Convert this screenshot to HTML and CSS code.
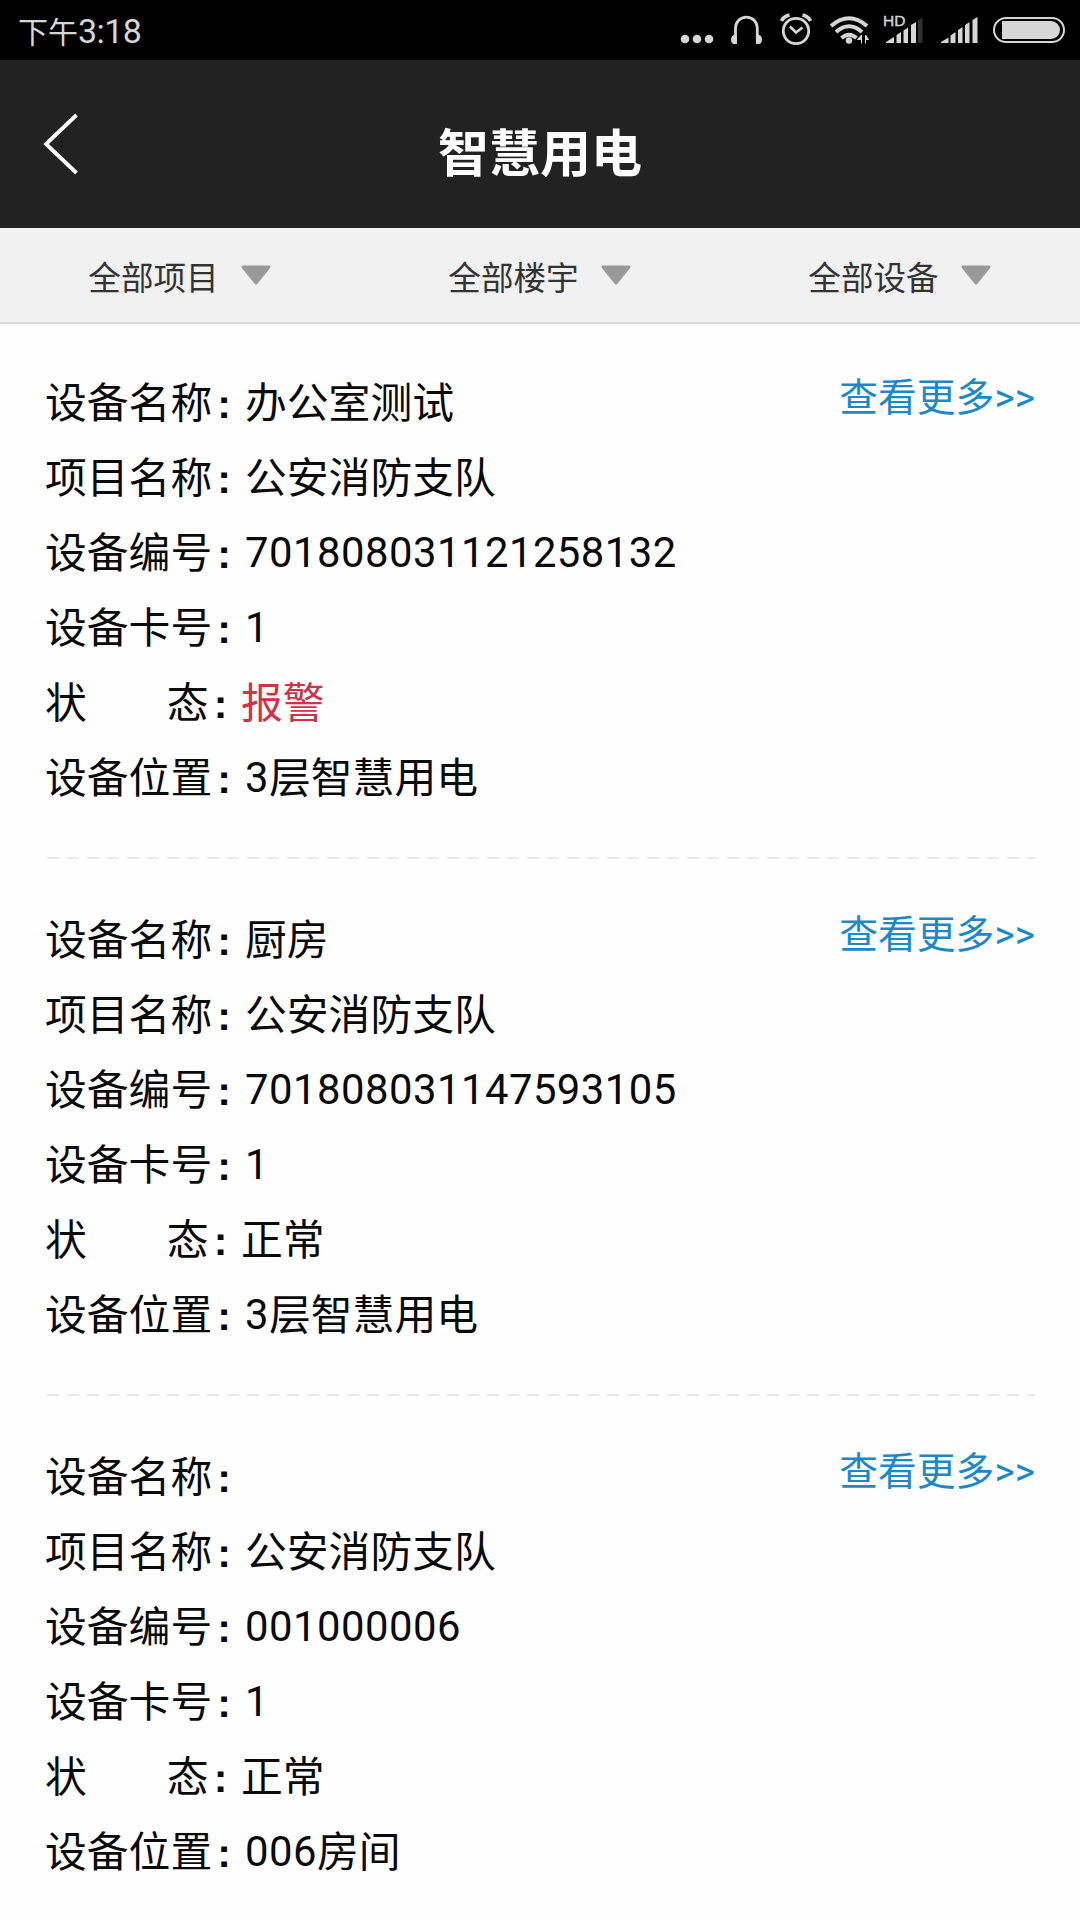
FILE: index.html
```
<!DOCTYPE html>
<html lang="zh-cn">
<head>
    <meta charset="UTF-8" />
    <title>智慧用电</title>
    <link rel="stylesheet" href="styles.css">
</head>
<body>
    <div class="status-bar">
        <div class="time">下午<span>3:18</span></div>
        <svg class="status-icons" width="420" height="60" viewBox="0 0 420 60">
            <!-- 更多 -->
            <g fill="#d6d6d6">
                <circle cx="25" cy="39" r="4.3"/>
                <circle cx="37" cy="39" r="4.3"/>
                <circle cx="49" cy="39" r="4.3"/>
            </g>
            <!-- 耳机 -->
            <path d="M75.500 42V28a10.900 10.900 0 0 1 21.800 0V42" fill="none" stroke="#d6d6d6" stroke-width="2.800"/>
            <path d="M77 34.500v9.500h-3.500q-2.500-1-2.500-4.500t2.500-4.500zM96 34.500v9.500h3.500q2.500-1 2.500-4.500t-2.500-4.500z" fill="#d6d6d6"/>
            <!-- 闹钟 -->
            <g fill="none" stroke="#d6d6d6" stroke-width="2.800">
                <circle cx="136" cy="31" r="12.700"/>
                <path d="M130 26.500l6 6 6.500-5"/>
                <path d="M121.500 21q2-4.500 8-6M150.500 21q-2-4.500-8-6" stroke-width="3.500"/>
            </g>
            <!-- wifi -->
            <g fill="none" stroke="#d6d6d6" stroke-width="4">
                <path d="M171 26q18-15.500 36 0"/>
                <path d="M176 32q13-11.500 26 0"/>
                <path d="M181.500 38q7.500-6.500 15 0" />
            </g>
            <circle cx="189" cy="40.500" r="3.200" fill="#d6d6d6"/>
            <path d="M201.500 43.500V35l-4 4.500h4M205.500 35v8.500M205.500 35l3 4.500h-3" fill="#d6d6d6" stroke="#d6d6d6" stroke-width="1"/>
            <!-- 信号 -->
            <text x="223" y="26" class="hd">HD</text>
            <g fill="#d6d6d6">
                <path d="M226 43v-1l8-5v6zM236.500 43v-8l4.500-3v11zM243.500 43V30.500l4.500-3V43zM251 43V25l5-3v21z"/>
                <path d="M281 43v-1l7.500-4.500V43zM290.500 43v-7.500l5-3.500v11zM298 43V30l4.500-3v16zM305 43V25l4.500-3v21zM312.500 43V20l5-3v26z"/>
            </g>
            <path d="M258 43V20.500l4.500-3V43z" fill="#303030"/>
            <!-- 电池 -->
            <rect x="334" y="18" width="70" height="24" rx="12" fill="none" stroke="#d6d6d6" stroke-width="2"/>
            <path d="M342 21h49a9 9 0 0 1 0 18h-49z" fill="#d6d6d6"/>
        </svg>
    </div>

    <div class="header">
        <svg class="back" width="40" height="64" viewBox="0 0 40 64">
            <path d="M36.500 3L6 32l30.500 29" fill="none" stroke="#fff" stroke-width="3.800"/>
        </svg>
        <h1>智慧用电</h1>
    </div>

    <div class="filter">
        <div class="filter-item">全部项目<svg width="32" height="22" viewBox="0 0 32 22"><path d="M3 3h26L16 19z"/></svg></div>
        <div class="filter-item">全部楼宇<svg width="32" height="22" viewBox="0 0 32 22"><path d="M3 3h26L16 19z"/></svg></div>
        <div class="filter-item">全部设备<svg width="32" height="22" viewBox="0 0 32 22"><path d="M3 3h26L16 19z"/></svg></div>
    </div>

    <div class="list">
        <div class="item">
            <div class="info">
                <p><span class="label">设备名称<b>:</b></span>办公室测试</p>
                <p><span class="label">项目名称<b>:</b></span>公安消防支队</p>
                <p><span class="label">设备编号<b>:</b></span><span class="num">701808031121258132</span></p>
                <p><span class="label">设备卡号<b>:</b></span><span class="num">1</span></p>
                <p><span class="label state"><i>状</i><i>态</i><b>:</b></span><span class="alarm">报警</span></p>
                <p><span class="label">设备位置<b>:</b></span><span class="num">3</span>层智慧用电</p>
            </div>
            <a class="more">查看更多<span>&gt;&gt;</span></a>
        </div>
        <div class="line"></div>
        <div class="item">
            <div class="info">
                <p><span class="label">设备名称<b>:</b></span>厨房</p>
                <p><span class="label">项目名称<b>:</b></span>公安消防支队</p>
                <p><span class="label">设备编号<b>:</b></span><span class="num">701808031147593105</span></p>
                <p><span class="label">设备卡号<b>:</b></span><span class="num">1</span></p>
                <p><span class="label state"><i>状</i><i>态</i><b>:</b></span>正常</p>
                <p><span class="label">设备位置<b>:</b></span><span class="num">3</span>层智慧用电</p>
            </div>
            <a class="more">查看更多<span>&gt;&gt;</span></a>
        </div>
        <div class="line"></div>
        <div class="item">
            <div class="info">
                <p><span class="label">设备名称<b>:</b></span></p>
                <p><span class="label">项目名称<b>:</b></span>公安消防支队</p>
                <p><span class="label">设备编号<b>:</b></span><span class="num">001000006</span></p>
                <p><span class="label">设备卡号<b>:</b></span><span class="num">1</span></p>
                <p><span class="label state"><i>状</i><i>态</i><b>:</b></span>正常</p>
                <p><span class="label">设备位置<b>:</b></span><span class="num">006</span>房间</p>
            </div>
            <a class="more">查看更多<span>&gt;&gt;</span></a>
        </div>
    </div>
</body>
</html>
```
FILE: styles.css
```
*{
    margin: 0;
    padding: 0;
    box-sizing: border-box;
}
html,body{
    width: 100%;
    height: 100%;
}
body{
    font-family: Roboto, "Noto Sans CJK SC", sans-serif;
    background-color: #fefefe;
    color: #0a0a0a;
    overflow: hidden;
}
svg{
    display: block;
}

/* 状态栏 */
.status-bar{
    height: 60px;
    background-color: #000;
    display: flex;
    justify-content: space-between;
}
.time{
    padding-left: 18px;
    font-size: 30px;
    line-height: 62px;
    color: #d6d6d6;
}
.time span{
    font-size: 34px;
    letter-spacing: -.6px;
}
.hd{
    font-family: "Liberation Sans", sans-serif;
    font-size: 15.5px;
    fill: #d6d6d6;
    stroke: #d6d6d6;
    stroke-width: .4;
}

/* 头部 */
.header{
    height: 168px;
    background-color: #222;
    display: grid;
    grid-template-columns: 120px 1fr 120px;
}
.back{
    margin: 52px 0 0 40px;
}
.header h1{
    text-align: center;
    font-size: 51px;
    line-height: 189px;
    font-weight: 700;
    color: #fff;
}

/* 筛选 */
.filter{
    height: 96px;
    background-color: #f1f1f1;
    border-bottom: 2px solid #dadada;
    display: flex;
}
.filter-item{
    flex: 1;
    display: flex;
    justify-content: center;
    align-items: center;
    gap: 21px;
    font-size: 32.6px;
    color: #333;
}
.filter-item svg{
    fill: #999;
    stroke: #999;
    stroke-width: 3;
    stroke-linejoin: round;
}

/* 设备列表 */
.list{
    padding: 0 45px;
}
.item{
    height: 533px;
    padding-top: 42px;
    display: flex;
    justify-content: space-between;
}
.info p{
    display: flex;
    height: 75px;
    font-size: 41.8px;
    line-height: 75px;
    white-space: nowrap;
}
.label{
    display: flex;
    width: 200px;
}
.label b{
    font-family: "Liberation Sans", sans-serif;
    font-size: 41px;
    line-height: 77px;
    margin-left: 5px;
}
.label i{
    font-style: normal;
}
.state{
    width: 196px;
}
.state i+i{
    margin-left: 80px;
}
.num{
    letter-spacing: .5px;
    line-height: 73px;
}
.alarm{
    color: #cf3348;
}
.more{
    font-size: 38.8px;
    line-height: 64px;
    color: #1e88c7;
}
.line{
    height: 2px;
    margin: 0 0 2px 2px;
    background: repeating-linear-gradient(to right, #e9e7ea 0, #e9e7ea 12px, transparent 12px, transparent 20px);
}
```
